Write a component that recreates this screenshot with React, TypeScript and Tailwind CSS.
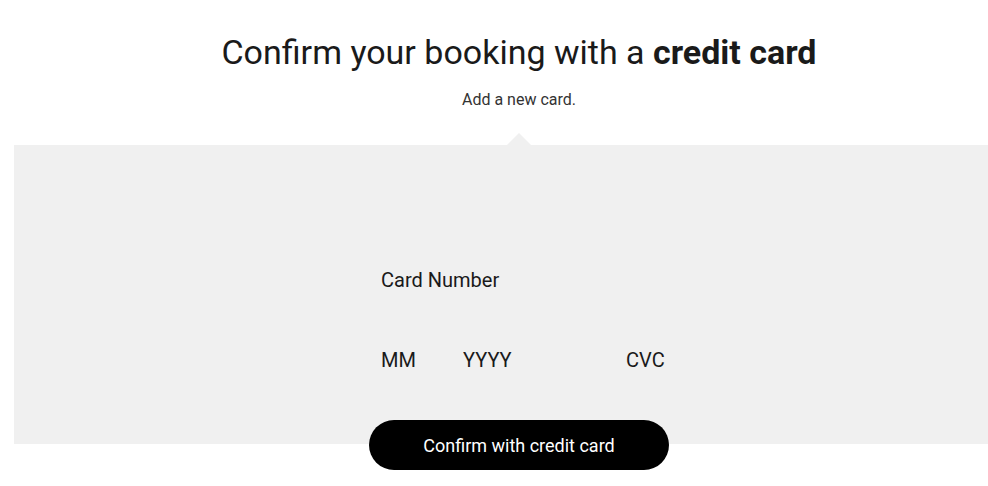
export default function App() {
  return (
    <div className="w-[988px] h-[486px] overflow-hidden bg-white text-[#1a1a1a] [font-family:Roboto,'Liberation_Sans',sans-serif]">
      <div className="w-[1010px] ml-[14px] flex flex-col items-center">
        <h1 className="mt-[30px] text-[34px] leading-[44px] font-normal">
          Confirm your booking with a <span className="font-bold">credit card</span>
        </h1>
        <p className="mt-[16px] text-[16px] leading-[20px] text-[#333]">Add a new card.</p>

        <div className="relative mt-[35px] w-full h-[299px] bg-[#f0f0f0]">
          {/* pointer */}
          <div className="absolute left-1/2 -top-[12px] -translate-x-1/2 w-0 h-0 border-l-[12px] border-r-[12px] border-b-[12px] border-l-transparent border-r-transparent border-b-[#f0f0f0]" />

          <form className="w-[300px] mx-auto pt-[121px] flex flex-col">
            <input
              type="text"
              placeholder="Card Number"
              className="h-[28px] px-[12px] bg-transparent text-[20px] placeholder:text-[#1a1a1a] outline-none"
            />
            <div className="mt-[52px] flex">
              <input
                type="text"
                placeholder="MM"
                className="w-[82px] h-[28px] px-[12px] bg-transparent text-[20px] placeholder:text-[#1a1a1a] outline-none"
              />
              <input
                type="text"
                placeholder="YYYY"
                className="w-[163px] h-[28px] px-[12px] bg-transparent text-[20px] placeholder:text-[#1a1a1a] outline-none"
              />
              <input
                type="text"
                placeholder="CVC"
                className="w-[90px] shrink-0 h-[28px] px-[12px] bg-transparent text-[20px] placeholder:text-[#1a1a1a] outline-none"
              />
            </div>
          </form>
        </div>

        <button className="-mt-[24px] relative w-[300px] h-[50px] rounded-full bg-black text-white text-[18px]">
          Confirm with credit card
        </button>
      </div>
    </div>
  );
}
